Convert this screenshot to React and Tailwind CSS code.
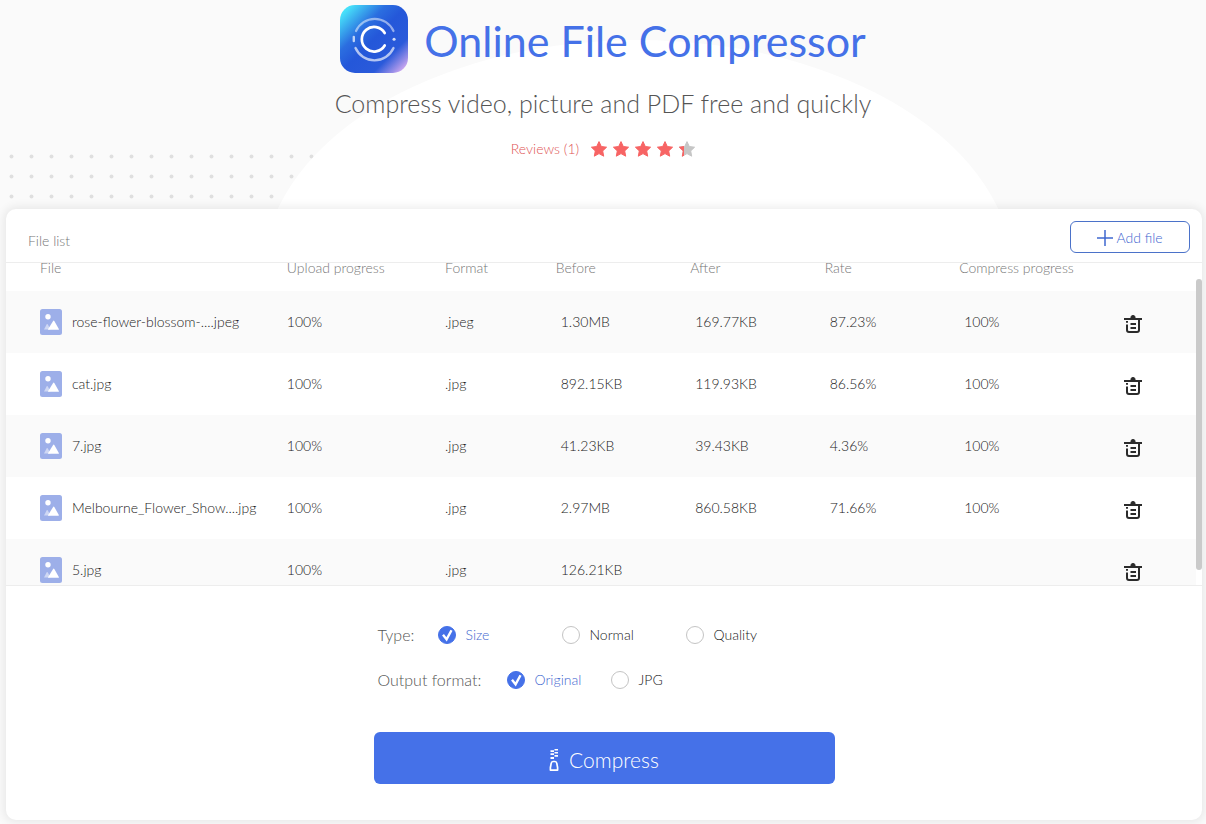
import { useState } from "react";

const files = [
  { name: "rose-flower-blossom-....jpeg", format: ".jpeg", before: "1.30MB", after: "169.77KB", rate: "87.23%", done: "100%" },
  { name: "cat.jpg", format: ".jpg", before: "892.15KB", after: "119.93KB", rate: "86.56%", done: "100%" },
  { name: "7.jpg", format: ".jpg", before: "41.23KB", after: "39.43KB", rate: "4.36%", done: "100%" },
  { name: "Melbourne_Flower_Show....jpg", format: ".jpg", before: "2.97MB", after: "860.58KB", rate: "71.66%", done: "100%" },
  { name: "5.jpg", format: ".jpg", before: "126.21KB", after: "", rate: "", done: "" },
];

function Logo() {
  return (
    <svg viewBox="0 0 68 68" className="size-[68px] shrink-0" aria-hidden="true">
      <defs>
        <linearGradient id="logo-base" x1="0" y1="0" x2="1" y2="1">
          <stop offset="0" stopColor="#4dfaff" />
          <stop offset="0.1" stopColor="#45d9f8" />
          <stop offset="0.34" stopColor="#2b6ee0" />
          <stop offset="0.5" stopColor="#2457d9" />
          <stop offset="0.74" stopColor="#2a5ada" />
          <stop offset="0.88" stopColor="#9a8fe8" />
          <stop offset="1" stopColor="#ffc0f8" />
        </linearGradient>
      </defs>
      <rect width="68" height="68" rx="15" fill="url(#logo-base)" />
      <g fill="none" stroke="#fff" strokeLinecap="round">
        <path d="M44.700 28A12.300 12.300 0 1 0 44.700 40.500" strokeWidth="2.700" />
        <g strokeWidth="2.200" opacity="0.5">
          <path d="M16 26A20.500 20.500 0 0 1 53.500 26" />
        </g>
        <path d="M15.500 43A20.800 20.800 0 0 0 53.500 43" strokeWidth="2.400" opacity="0.65" />
        <path d="M13.800 32v4" strokeWidth="2.400" opacity="0.7" />
        <path d="M54 34.200h.1" strokeWidth="3" opacity="0.8" />
      </g>
    </svg>
  );
}

const starPath = "M8 .6l2.300 4.900 5.300.7-3.900 3.700 1 5.300L8 12.600l-4.700 2.600 1-5.300L.4 6.200l5.300-.7z";

function Star({ partial }) {
  return (
    <svg viewBox="0 0 16 16" className="size-4" aria-hidden="true">
      <clipPath id="star-part">
        <rect width="5" height="16" />
      </clipPath>
      <path d={starPath} fill={partial ? "#c6c6c6" : "#f76464"} stroke={partial ? "#c6c6c6" : "#f76464"} strokeLinejoin="round" />
      {partial && <path d={starPath} fill="#f76464" stroke="#f76464" strokeLinejoin="round" clipPath="url(#star-part)" />}
    </svg>
  );
}

function PictureIcon() {
  return (
    <svg viewBox="0 0 22 26" className="h-[26px] w-[22px] shrink-0" aria-hidden="true">
      <rect width="22" height="26" rx="2.500" fill="#9dafe9" />
      <circle cx="8" cy="7.700" r="2.700" fill="#fff" />
      <path d="M4 20.500l2.700-5.200q.5-.8 1 0l2.800 5.200z" fill="#ced7f4" />
      <path d="M8.500 20.800q-.8 0-.3-.9l4.900-7.900q.6-.8 1.200 0l4.500 7.900q.4.900-.5.900z" fill="#fff" />
    </svg>
  );
}

function TrashIcon() {
  return (
    <svg viewBox="0 0 18 18" className="size-[18px]" fill="none" stroke="#2b2b2b" strokeWidth="2" aria-hidden="true">
      <path d="M0 4h18" />
      <path d="M7 3V2q0-1.500 2-1.500t2 1.500v1z" fill="#2b2b2b" strokeWidth="1" />
      <path d="M3 6v1.700M3 9.500V15q0 2 2 2h8q2 0 2-2V4" />
      <path d="M6.500 9h5.500M6.500 13h5.500" />
    </svg>
  );
}

function ZipIcon() {
  return (
    <svg viewBox="0 0 10 22" className="h-[22px] w-[10px]" fill="#fff" aria-hidden="true">
      <path d="M5.500 0H9v1.600H5.500zM1.500 1.200H5v1.800H1.500zM5.500 2.900H9v1.700H5.500zM1.500 4.300H5v1.700H1.500zM5.500 6H9v1.700H5.500zM1.500 8H5v2H1.500z" />
      <path d="M4 12.500h2q1.500 0 1.800 1.800l.8 4.200v2.600H1.400v-2.600l.8-4.200q.3-1.800 1.800-1.800z" fill="none" stroke="#fff" strokeWidth="1.700" strokeLinejoin="round" />
    </svg>
  );
}

function Choice({ name, label, checked, onChange }) {
  return (
    <label className="flex cursor-pointer items-center gap-[10px] text-sm">
      <span className="grid">
        <input
          type="radio"
          name={name}
          checked={checked}
          onChange={onChange}
          className="col-start-1 row-start-1 size-[18px] appearance-none rounded-full border border-[#c4c4c4] bg-white checked:border-[#4571e8] checked:bg-[#4571e8]"
        />
        {checked && (
          <svg viewBox="0 0 18 18" className="pointer-events-none col-start-1 row-start-1 size-[18px]" fill="none" stroke="#fff" strokeWidth="2.400" aria-hidden="true">
            <path d="M5 8.700l3.600 4.700L13.500 4.300" />
          </svg>
        )}
      </span>
      <span className={checked ? "text-[#3f68d0]" : "text-[#222]"}>{label}</span>
    </label>
  );
}

export default function App() {
  const [type, setType] = useState("Size");
  const [output, setOutput] = useState("Original");

  return (
    <div className="relative isolate min-h-screen overflow-hidden bg-[#fafafa] font-['Lato','Noto_Sans',sans-serif] font-light">
      <svg className="absolute inset-x-0 top-0 -z-10 h-[240px] w-full" aria-hidden="true">
        <defs>
          <pattern id="dots" x="1" y="146" width="20" height="20" patternUnits="userSpaceOnUse">
            <circle cx="10.500" cy="10.500" r="2" fill="#dfdfdf" />
          </pattern>
        </defs>
        <rect x="1" y="146" width="320" height="60" fill="url(#dots)" />
        <svg x="50%" overflow="visible">
          <ellipse cx="35" cy="274" rx="375" ry="234" fill="#fff" />
        </svg>
      </svg>

      <header className="flex flex-col items-center pt-[5px]">
        <div className="flex items-center gap-4">
          <Logo />
          <h1 className="pt-1 text-[43px] leading-[64px] font-normal text-[#4571e8]">Online File Compressor</h1>
        </div>
        <p className="mt-[15px] text-[25px] leading-[30px] text-[#555]">Compress video, picture and PDF free and quickly</p>
        <div className="mt-[21px] flex items-center gap-3 text-sm text-[#e05555]">
          <a href="#reviews">Reviews (1)</a>
          <div className="flex gap-[6px]" role="img" aria-label="4.3 out of 5 stars">
            <Star />
            <Star />
            <Star />
            <Star />
            <Star partial />
          </div>
        </div>
      </header>

      <main className="mx-1 mt-[50px] mb-1 ml-[6px] rounded-[10px] bg-white pb-9 shadow-[0_0_10px_2px_rgba(0,0,0,0.08)]">
        <div className="flex h-[54px] items-center justify-between border-b border-[#ededed] pt-[2px] pr-3 pl-[22px]">
          <h2 className="pt-2 text-sm text-[#777]">File list</h2>
          <button className="flex h-8 w-[120px] items-center justify-center gap-[3px] rounded-md border border-[#4b72c9] pt-[2px] text-sm text-[#3f68d0]">
            <svg viewBox="0 0 16 16" className="size-4" stroke="currentColor" strokeWidth="1.500" aria-hidden="true">
              <path d="M8 0v16M0 8h16" />
            </svg>
            Add file
          </button>
        </div>

        <div className="-mt-1 flex h-[327px] border-b border-[#ededed]">
          <div className="flex-1 overflow-y-auto [scrollbar-width:none]">
            <table className="w-full table-fixed text-left text-sm text-[#222]">
              <thead>
                <tr className="h-8 align-top leading-[18px] text-[#777]">
                  <th className="w-[23.6%] pl-[34px] font-light">File</th>
                  <th className="w-[13.3%] font-light">Upload progress</th>
                  <th className="w-[9.3%] font-light">Format</th>
                  <th className="w-[11.3%] font-light">Before</th>
                  <th className="w-[11.3%] font-light">After</th>
                  <th className="w-[11.3%] font-light">Rate</th>
                  <th className="w-[12%] font-light">Compress progress</th>
                  <th aria-label="Delete" />
                </tr>
              </thead>
              <tbody>
                {files.map((f) => (
                  <tr key={f.name} className="h-[62px] odd:bg-[#fafafa]">
                    <td className="pl-[34px]">
                      <div className="flex items-center gap-[10px] whitespace-nowrap">
                        <PictureIcon />
                        {f.name}
                      </div>
                    </td>
                    <td>100%</td>
                    <td>{f.format}</td>
                    <td className="pl-[5px]">{f.before}</td>
                    <td className="pl-[5px]">{f.after}</td>
                    <td className="pl-[5px]">{f.rate}</td>
                    <td className="pl-[5px]">{f.done}</td>
                    <td className="pt-1 pl-[22px]">
                      <button className="block" aria-label={"Delete " + f.name}>
                        <TrashIcon />
                      </button>
                    </td>
                  </tr>
                ))}
              </tbody>
            </table>
          </div>
          <div className="w-[6px] pt-5">
            <div className="h-[291px] rounded-full bg-[#cacaca]" />
          </div>
        </div>

        <div className="mx-auto mt-[37px] w-[461px]">
          <fieldset className="flex h-6 items-center pl-1" aria-label="Type">
            <span className="w-[60px] text-base text-[#555]">Type:</span>
            <div className="grid grid-cols-[124px_124px_124px]">
              {["Size", "Normal", "Quality"].map((t) => (
                <Choice key={t} name="type" label={t} checked={type === t} onChange={() => setType(t)} />
              ))}
            </div>
          </fieldset>
          <fieldset className="mt-[21px] flex h-6 items-center pl-1" aria-label="Output format">
            <span className="w-[129px] text-base text-[#555]">Output format:</span>
            <div className="grid grid-cols-[104px_104px]">
              {["Original", "JPG"].map((t) => (
                <Choice key={t} name="output" label={t} checked={output === t} onChange={() => setOutput(t)} />
              ))}
            </div>
          </fieldset>
          <button className="mt-10 flex h-[52px] w-full items-center justify-center gap-[10px] rounded-md bg-[#4571e8] pt-1 text-[21px] text-white">
            <ZipIcon />
            Compress
          </button>
        </div>
      </main>
    </div>
  );
}
